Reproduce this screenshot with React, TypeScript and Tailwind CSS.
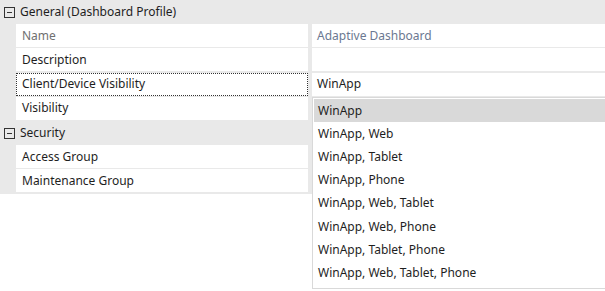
import React from 'react';

const options = [
  'WinApp',
  'WinApp, Web',
  'WinApp, Tablet',
  'WinApp, Phone',
  'WinApp, Web, Tablet',
  'WinApp, Web, Phone',
  'WinApp, Tablet, Phone',
  'WinApp, Web, Tablet, Phone',
];

const CollapseIcon = () => (
  <svg width="11" height="11" viewBox="0 0 11 11" className="shrink-0">
    <rect x="0.5" y="0.5" width="10" height="10" fill="none" stroke="#333" />
    <line x1="3" y1="5.5" x2="8" y2="5.5" stroke="#333" />
  </svg>
);

const Category = ({ label }: { label: string }) => (
  <div className="flex h-[24px] items-center gap-[5px] bg-[#e9e9e9] pl-[4px] text-[#1e1e1e]">
    <CollapseIcon />
    <span>{label}</span>
  </div>
);

interface RowProps {
  name: string;
  value?: string;
  muted?: boolean;
  focused?: boolean;
}

const Row = ({ name, value, muted, focused }: RowProps) => (
  <div className="flex h-[24.3px] bg-[#e9e9e9]">
    <div className="w-[16px] shrink-0" />
    <div
      className={`flex h-[23px] w-[292px] shrink-0 items-center bg-white pl-[5px] ${
        focused ? 'border border-dotted border-[#333]' : 'border border-transparent'
      } ${muted ? 'text-[#707070]' : 'text-[#1e1e1e]'}`}
    >
      {name}
    </div>
    <div className="w-[4px] shrink-0" />
    <div
      className={`flex h-[23px] flex-1 items-center bg-white pl-[5px] ${
        muted ? 'text-[#6b7891]' : 'text-[#1e1e1e]'
      }`}
    >
      {value}
    </div>
  </div>
);

export default function App() {
  return (
    <div className="relative h-[291px] w-[605px] overflow-hidden bg-white text-[12px] font-['Noto_Sans',sans-serif]">
      <Category label="General (Dashboard Profile)" />
      <Row name="Name" value="Adaptive Dashboard" muted />
      <Row name="Description" />
      <Row name="Client/Device Visibility" value="WinApp" focused />
      <Row name="Visibility" />
      <Category label="Security" />
      <Row name="Access Group" />
      <Row name="Maintenance Group" />

      <div className="absolute left-[312px] top-[97px] h-[192px] w-[300px] border border-[#d9d9d9] bg-white p-px">
        {options.map((o, i) => (
          <div
            key={o}
            className={`flex h-[23.2px] items-center pl-[4px] text-[#1e1e1e] ${
              i === 0 ? 'bg-[#d9d9d9]' : ''
            }`}
          >
            {o}
          </div>
        ))}
      </div>
    </div>
  );
}
